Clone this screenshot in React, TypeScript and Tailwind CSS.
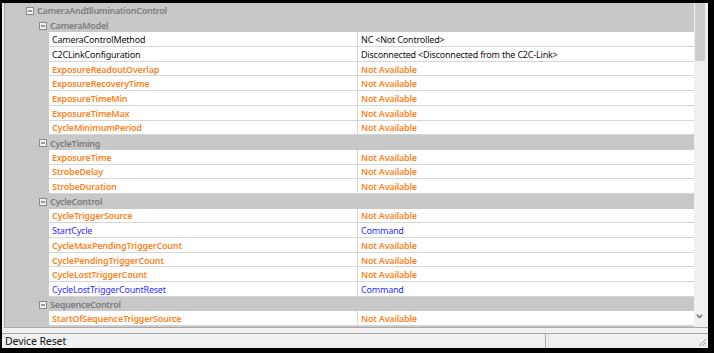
import React from "react";

type Row =
  | { kind: "cat"; level: 1 | 2; label: string }
  | { kind: "prop"; name: string; value: string; tone: "black" | "orange" | "blue" };

const rows: Row[] = [
  { kind: "cat", level: 1, label: "CameraAndIlluminationControl" },
  { kind: "cat", level: 2, label: "CameraModel" },
  { kind: "prop", name: "CameraControlMethod", value: "NC <Not Controlled>", tone: "black" },
  { kind: "prop", name: "C2CLinkConfiguration", value: "Disconnected <Disconnected from the C2C-Link>", tone: "black" },
  { kind: "prop", name: "ExposureReadoutOverlap", value: "Not Available", tone: "orange" },
  { kind: "prop", name: "ExposureRecoveryTime", value: "Not Available", tone: "orange" },
  { kind: "prop", name: "ExposureTimeMin", value: "Not Available", tone: "orange" },
  { kind: "prop", name: "ExposureTimeMax", value: "Not Available", tone: "orange" },
  { kind: "prop", name: "CycleMinimumPeriod", value: "Not Available", tone: "orange" },
  { kind: "cat", level: 2, label: "CycleTiming" },
  { kind: "prop", name: "ExposureTime", value: "Not Available", tone: "orange" },
  { kind: "prop", name: "StrobeDelay", value: "Not Available", tone: "orange" },
  { kind: "prop", name: "StrobeDuration", value: "Not Available", tone: "orange" },
  { kind: "cat", level: 2, label: "CycleControl" },
  { kind: "prop", name: "CycleTriggerSource", value: "Not Available", tone: "orange" },
  { kind: "prop", name: "StartCycle", value: "Command", tone: "blue" },
  { kind: "prop", name: "CycleMaxPendingTriggerCount", value: "Not Available", tone: "orange" },
  { kind: "prop", name: "CyclePendingTriggerCount", value: "Not Available", tone: "orange" },
  { kind: "prop", name: "CycleLostTriggerCount", value: "Not Available", tone: "orange" },
  { kind: "prop", name: "CycleLostTriggerCountReset", value: "Command", tone: "blue" },
  { kind: "cat", level: 2, label: "SequenceControl" },
  { kind: "prop", name: "StartOfSequenceTriggerSource", value: "Not Available", tone: "orange" },
];

function MinusBox() {
  return (
    <svg width="8" height="8" viewBox="0 0 8 8" className="shrink-0">
      <rect x="0.5" y="0.5" width="7" height="7" fill="#f2f2f2" stroke="#8a8a8a" />
      <line x1="2" y1="4" x2="6" y2="4" stroke="#404040" strokeWidth="1" />
    </svg>
  );
}

function toneClass(t: "black" | "orange" | "blue") {
  if (t === "orange") return "text-[#fb8424] font-semibold tracking-[-0.22px]";
  if (t === "blue") return "text-[#2d2dff] tracking-[-0.2px]";
  return "text-[#101010] tracking-[-0.2px]";
}

function GridRow({ row }: { row: Row }) {
  if (row.kind === "cat") {
    return (
      <div className="flex h-[14.7px] items-center bg-[#c8c8c8] pt-[1px]">
        <div className={row.level === 1 ? "w-[21px] shrink-0" : "w-[34px] shrink-0"} />
        <MinusBox />
        <span className="ml-[3px] font-semibold tracking-[-0.28px] text-[#7c7c7c]">{row.label}</span>
      </div>
    );
  }
  return (
    <div className="flex h-[14.7px] bg-[#c8c8c8]">
      <div className="w-[44px] shrink-0" />
      <div
        className={
          "flex w-[309px] shrink-0 items-center border-b border-r border-[#d6d6d6] bg-white pl-[3px] pt-[1px] " +
          toneClass(row.tone)
        }
      >
        {row.name}
      </div>
      <div
        className={
          "flex flex-1 items-center border-b border-[#d6d6d6] bg-white pl-[3px] pt-[1px] " + toneClass(row.tone)
        }
      >
        {row.value}
      </div>
    </div>
  );
}

export default function App() {
  return (
    <div
      className="h-[353px] w-[714px] overflow-hidden bg-black pb-[5px] pl-[2px] pr-[6px] pt-[3px] text-[9px] leading-none"
      style={{ fontFamily: '"Noto Sans", "Liberation Sans", sans-serif' }}
    >
      <div className="flex h-full flex-col bg-[#f0f0f0]">
        <div className="flex h-[325px] pl-[2px]">
          <div className="flex flex-1 border-b border-l border-[#a8a8a8]">
            <div className="flex-1 overflow-hidden bg-[#c8c8c8]">
              {rows.map((r, i) => (
                <GridRow key={i} row={r} />
              ))}
            </div>
            <div className="flex w-[14px] flex-col bg-[#f0f0f0] pr-[3px]">
              <div className="ml-[1px] h-[58px] bg-[#cdcdcd]" />
              <div className="flex-1" />
              <div className="flex h-[13px] items-start justify-center">
                <svg width="7" height="5" viewBox="0 0 7 5">
                  <path d="M0.8 0.8 L3.5 3.6 L6.2 0.8" fill="none" stroke="#606060" strokeWidth="1.3" />
                </svg>
              </div>
            </div>
          </div>
        </div>
        <div className="h-[5px]" />
        <div className="flex flex-1 border-t border-[#a8a8a8]">
          <div className="flex w-[544px] items-center border-r border-[#a8a8a8] pl-[3px] pt-[1px] text-[10.5px] tracking-[-0.1px] text-[#101010]">
            Device Reset
          </div>
          <div className="ml-[2px] flex flex-1 items-end justify-end border-l border-[#dcdcdc]">
            <svg width="10" height="10" viewBox="0 0 10 10" className="mb-[1px] mr-[1px]">
              <path d="M9 2 L2 9 M9 5 L5 9 M9 8 L8 9" stroke="#a0a0a0" strokeWidth="1" />
            </svg>
          </div>
        </div>
      </div>
    </div>
  );
}
